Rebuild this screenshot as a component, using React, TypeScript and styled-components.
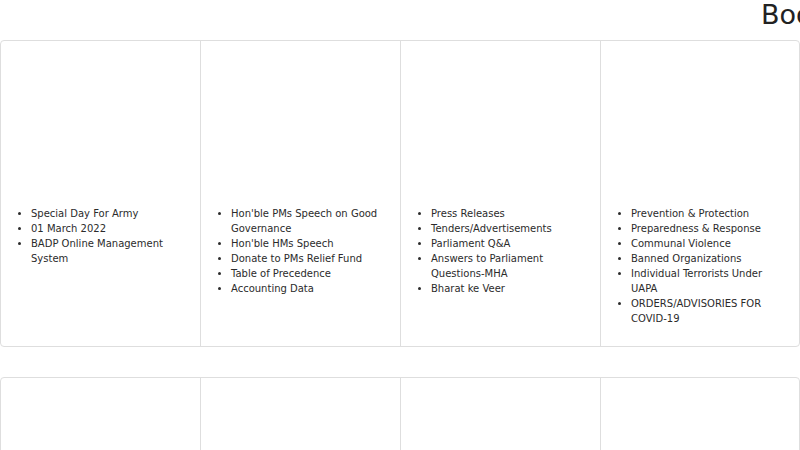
import React from "react";
import styled, { createGlobalStyle } from "styled-components";

const Global = createGlobalStyle`
  html, body { margin: 0; padding: 0; background: #fff; overflow: hidden; }
  body { font-family: "DejaVu Sans", "Liberation Sans", sans-serif; color: #212529; }
`;

const Page = styled.div`
  width: 800px;
  overflow: hidden;
`;

const Header = styled.div`
  height: 40px;
  padding-left: 761px;
  white-space: nowrap;
  overflow: hidden;
`;

const Title = styled.h2`
  margin: 0;
  font-size: 27px;
  font-weight: 400;
  line-height: 30px;
  color: #222;
`;

const CardRow = styled.div`
  display: grid;
  grid-template-columns: 199px 200px 200px 199px;
  border: 1px solid #dedede;
  border-radius: 4px;
  margin-bottom: 30px;
  min-height: 307px;
  box-sizing: border-box;
`;

const Cell = styled.div<{ $first?: boolean }>`
  border-left: ${(p) => (p.$first ? "none" : "1px solid #dedede")};
  padding-top: 165px;
  padding-bottom: 19px;
`;

const List = styled.ul`
  margin: 0;
  padding-left: 30px;
  padding-right: 12px;
  font-size: 10px;
  line-height: 15px;
  color: #2b2b2b;
  list-style: disc;
`;

const columns: string[][] = [
  ["Special Day For Army", "01 March 2022", "BADP Online Management System"],
  [
    "Hon'ble PMs Speech on Good Governance",
    "Hon'ble HMs Speech",
    "Donate to PMs Relief Fund",
    "Table of Precedence",
    "Accounting Data",
  ],
  [
    "Press Releases",
    "Tenders/Advertisements",
    "Parliament Q&A",
    "Answers to Parliament Questions-MHA",
    "Bharat ke Veer",
  ],
  [
    "Prevention & Protection",
    "Preparedness & Response",
    "Communal Violence",
    "Banned Organizations",
    "Individual Terrorists Under UAPA",
    "ORDERS/ADVISORIES FOR COVID-19",
  ],
];

export default function App() {
  return (
    <Page>
      <Global />
      <Header>
        <Title>Books</Title>
      </Header>
      <CardRow>
        {columns.map((items, i) => (
          <Cell key={i} $first={i === 0}>
            <List>
              {items.map((t) => (
                <li key={t}>{t}</li>
              ))}
            </List>
          </Cell>
        ))}
      </CardRow>
      <CardRow>
        {[0, 1, 2, 3].map((i) => (
          <Cell key={i} $first={i === 0} />
        ))}
      </CardRow>
    </Page>
  );
}
